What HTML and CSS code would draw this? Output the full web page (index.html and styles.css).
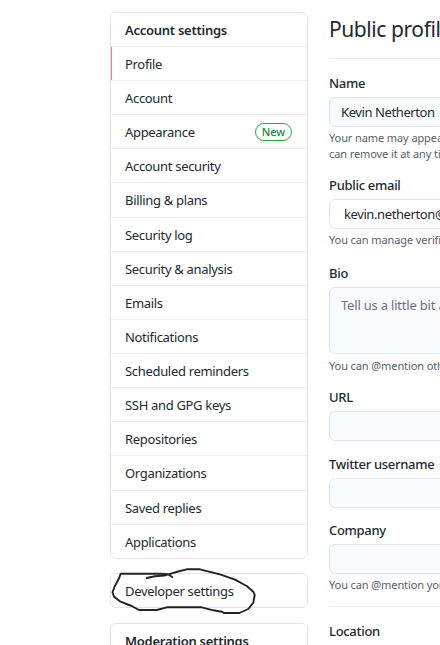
FILE: index.html
```html
<!DOCTYPE html>
<html lang="en">
<head>
<meta charset="utf-8">
<title>Public profile</title>
<link rel="stylesheet" href="styles.css">
</head>
<body>
<div class="page">
  <div class="sidebar">
    <nav class="menu">
      <h3 class="heading">Account settings</h3>
      <a class="current">Profile</a>
      <a>Account</a>
      <a>Appearance<span class="badge">New</span></a>
      <a>Account security</a>
      <a>Billing &amp; plans</a>
      <a>Security log</a>
      <a>Security &amp; analysis</a>
      <a>Emails</a>
      <a>Notifications</a>
      <a>Scheduled reminders</a>
      <a>SSH and GPG keys</a>
      <a>Repositories</a>
      <a>Organizations</a>
      <a>Saved replies</a>
      <a>Applications</a>
    </nav>
    <nav class="menu single">
      <a>Developer settings</a>
      <svg class="scribble" width="150" height="50" viewBox="109 566 150 50" fill="none" stroke="#222" stroke-width="1.9" stroke-linejoin="round" stroke-linecap="round">
        <path d="M172.300 577L168 574.300 160 573.700H120.700L119 578.300 114.500 586.700 112.500 592.300 114 596.700 120 601.300 131.700 606 139 610H156.700L166.700 607.300H201.700L213.300 610.300 221.700 611.700 224 613H239.300L248.300 609 253.300 602.700 254.700 595 253.300 591.700 246.700 586 235 579.700 220 574.300 205 570.700 200 569.300H186.700L180 571 168.300 574.300 164.300 575.500 155 576.300 146.700 578"/>
      </svg>
    </nav>
    <nav class="menu single">
      <h3 class="heading">Moderation settings</h3>
    </nav>
  </div>
  <main class="content">
    <h2 class="title">Public profile</h2>
    <section class="field name">
      <label>Name</label>
      <div class="input">Kevin Netherton</div>
      <p>Your name may appear around GitHub<br>can remove it at any time.</p>
    </section>
    <section class="field email">
      <label>Public email</label>
      <div class="input select">kevin.netherton@gov.bc.ca</div>
      <p>You can manage verified email addresses</p>
    </section>
    <section class="field bio">
      <label>Bio</label>
      <div class="input area">Tell us a little bit about yourself</div>
      <p>You can @mention other users</p>
    </section>
    <section class="field url">
      <label>URL</label>
      <div class="input"></div>
    </section>
    <section class="field twitter">
      <label>Twitter username</label>
      <div class="input"></div>
    </section>
    <section class="field company">
      <label>Company</label>
      <div class="input"></div>
      <p>You can @mention your company</p>
    </section>
    <section class="field location">
      <label>Location</label>
    </section>
  </main>
</div>
</body>
</html>
```
FILE: styles.css
```css
* { box-sizing: border-box; }
html, body { margin: 0; overflow: hidden; }
body {
  background: #fff;
  color: #24292e;
  font: 13px/19px "Noto Sans", sans-serif;
  letter-spacing: -0.32px;
}
.page {
  display: flex;
  gap: 21px;
  height: 645px;
  padding: 12px 0 0 110px;
  overflow: hidden;
}
.sidebar { flex: 0 0 198px; }
.menu {
  display: grid;
  grid-template-rows: 33.9px;
  grid-auto-rows: 34.14px;
  height: 547px;
  margin-bottom: 14px;
  border: 1px solid #e1e4e8;
  border-radius: 6px;
}
.menu > a, .heading {
  display: flex;
  align-items: center;
  justify-content: space-between;
  margin: 0;
  padding: 2px 15px 0 14px;
  border-bottom: 1px solid #eaecef;
  white-space: nowrap;
}
.menu > :last-child, .single > a { border-bottom: 0; }
.menu.single > a, .single > .heading { padding-top: 1px; }
.heading { font-size: 13px; font-weight: 600; letter-spacing: -0.26px; }
.menu > .current { box-shadow: inset 1px 0 #f9826c; }
.badge {
  width: 37px;
  height: 18px;
  margin-top: -1px;
  border: 1px solid #28a745;
  border-radius: 9px;
  color: #22863a;
  font-size: 11px;
  font-weight: 500;
  line-height: 16px;
  letter-spacing: 0;
  text-align: center;
}
.single { position: relative; height: 35px; margin-bottom: 15px; }
.scribble { position: absolute; left: -2px; top: -8px; }
.content { flex: 0 0 500px; }
.title {
  height: 47px;
  margin: 0 0 15px;
  border-bottom: 1px solid #eaecef;
  font-size: 21px;
  font-weight: 400;
  line-height: 35px;
  letter-spacing: -0.42px;
}
.field label {
  display: block;
  height: 23px;
  font-weight: 500;
  line-height: 19px;
  letter-spacing: -0.3px;
}
.input {
  height: 30px;
  padding: 0 11px;
  border: 1px solid #e1e4e8;
  border-radius: 6px;
  background: #fafbfc;
  line-height: 28px;
  letter-spacing: -0.4px;
  white-space: nowrap;
}
.select { padding-left: 14px; background: #fff; }
.area { height: 67px; padding-top: 3px; color: #6a737d; letter-spacing: -0.2px; }
.field p {
  margin: 3px 0 0;
  color: #586069;
  font-size: 11px;
  line-height: 16px;
  letter-spacing: -0.1px;
  white-space: nowrap;
}
.name { height: 102px; }
.email { height: 88px; }
.bio { height: 124px; }
.field.bio p { margin-top: 4px; }
.url { height: 67px; }
.twitter { height: 66px; }
.company { height: 86px; margin-bottom: 15px; border-bottom: 1px solid #eaecef; }
```
